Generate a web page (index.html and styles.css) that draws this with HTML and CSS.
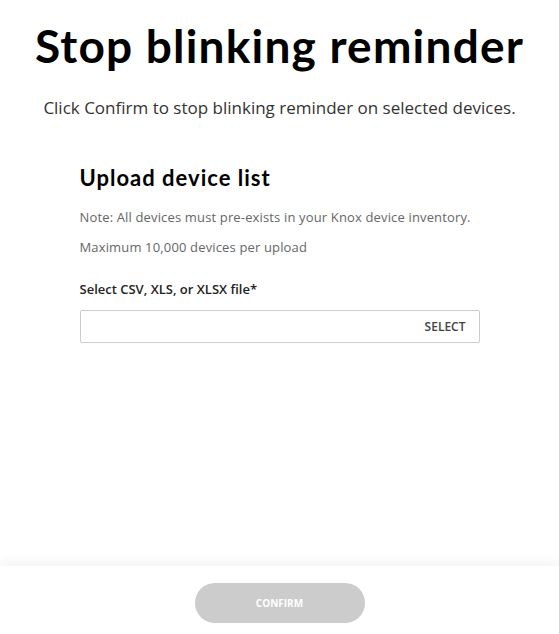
FILE: index.html
```html
<!DOCTYPE html>
<html>
<head>
<meta charset="utf-8">
<link rel="stylesheet" href="styles.css">
</head>
<body>
<div class="page">
  <main class="content">
    <h1 class="title">Stop blinking reminder</h1>
    <p class="subtitle">Click Confirm to stop blinking reminder on selected devices.</p>
    <section class="upload">
      <h2 class="upload-title">Upload device list</h2>
      <p class="note">Note: All devices must pre-exists in your Knox device inventory.</p>
      <p class="note">Maximum 10,000 devices per upload</p>
      <label class="field-label">Select CSV, XLS, or XLSX file*</label>
      <div class="file-input">
        <span class="file-name"></span>
        <span class="select-btn">SELECT</span>
      </div>
    </section>
  </main>
  <footer class="footer">
    <button class="confirm" disabled>CONFIRM</button>
  </footer>
</div>
</body>
</html>
```
FILE: styles.css
```css
html, body {
  margin: 0;
  padding: 0;
  background: #fff;
}
.page {
  height: 634px;
  display: flex;
  flex-direction: column;
  font-family: "Open Sans", "Noto Sans", sans-serif;
  color: #000;
}
.content {
  flex: 1;
  display: flex;
  flex-direction: column;
  align-items: center;
}
.title {
  margin: 18px 0 0;
  font-family: Lato, "Noto Sans", sans-serif;
  font-weight: 700;
  font-size: 46px;
  line-height: 56px;
  letter-spacing: 1.2px;
}
.subtitle {
  margin: 22px 0 0;
  font-size: 17px;
  line-height: 24px;
  color: #333;
}
.upload {
  width: 400px;
  margin-top: 44px;
  display: flex;
  flex-direction: column;
}
.upload-title {
  margin: 0;
  font-family: Lato, "Noto Sans", sans-serif;
  font-weight: 700;
  font-size: 22px;
  line-height: 28px;
  letter-spacing: 1px;
}
.note {
  margin: 14px 0 0;
  font-size: 13px;
  line-height: 22px;
  letter-spacing: 0.15px;
  color: #666;
}
.note + .note {
  margin-top: 8px;
}
.field-label {
  margin-top: 21px;
  font-size: 13px;
  line-height: 20px;
  font-weight: 600;
  color: #222;
}
.file-input {
  margin-top: 11px;
  height: 31px;
  border: 1px solid #ccc;
  border-radius: 2px;
  display: flex;
  align-items: center;
  justify-content: space-between;
  padding: 0 13px 0 10px;
}
.select-btn {
  font-size: 12px;
  font-weight: 600;
  color: #444;
}
.footer {
  height: 68px;
  flex: none;
  display: flex;
  justify-content: center;
  align-items: flex-start;
  box-shadow: 0 -6px 10px rgba(0, 0, 0, 0.04);
}
.confirm {
  margin-top: 17px;
  width: 170px;
  height: 40px;
  border: none;
  border-radius: 20px;
  background: #ccc;
  color: #fff;
  font-family: "Open Sans", sans-serif;
  font-weight: 700;
  font-size: 10px;
}
```
